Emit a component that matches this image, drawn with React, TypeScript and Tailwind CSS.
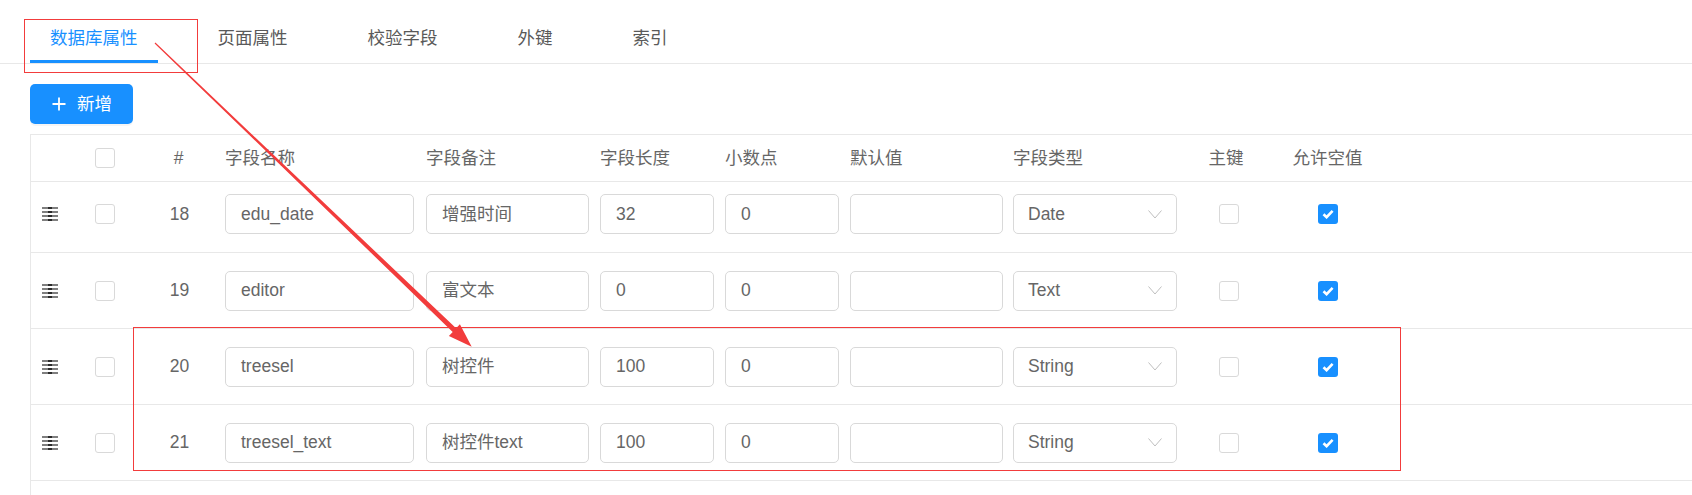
const rows = [
  { no: 18, name: "edu_date", remark: "增强时间", len: "32", type: "Date", first: true },
  { no: 19, name: "editor", remark: "富文本", len: "0", type: "Text" },
  { no: 20, name: "treesel", remark: "树控件", len: "100", type: "String" },
  { no: 21, name: "treesel_text", remark: "树控件text", len: "100", type: "String" },
];

const tabs = ["数据库属性", "页面属性", "校验字段", "外键", "索引"];

const grid =
  "grid grid-cols-[44px_65px_79px_201px_175px_124px_125px_164px_174px_92px_107px_1fr]";

function Box({ checked }: { checked?: boolean }) {
  if (checked) {
    return (
      <span className="flex h-[20px] w-[20px] items-center justify-center rounded-[3px] bg-[#1890ff]">
        <svg width="12" height="10" viewBox="0 0 12 10">
          <path d="M1.5 5.2 L4.6 8.2 L10.6 1.8" fill="none" stroke="#fff" strokeWidth="2.6" />
        </svg>
      </span>
    );
  }
  return <span className="block h-[20px] w-[20px] rounded-[3px] border border-[#d9d9d9] bg-white" />;
}

function Field({ value, w }: { value: string; w: string }) {
  return (
    <div
      className={`flex h-[40px] items-center rounded-[5px] border border-[#d9d9d9] bg-white pl-[15px] text-[#666] ${w}`}
    >
      {value}
    </div>
  );
}

function DragIcon() {
  return (
    <svg width="16" height="14" viewBox="0 0 16 14">
      {[1, 5, 9, 13].map((y) => (
        <g key={y}>
          <rect x="0" y={y - 0.75} width="16" height="1.5" fill="#555" />
          <rect x="6" y={y - 0.75} width="4" height="1.5" fill="#111" />
        </g>
      ))}
    </svg>
  );
}

export default function App() {
  return (
    <div
      className="relative h-[495px] w-full overflow-hidden bg-white text-[17.5px]"
      style={{ fontFamily: '"Liberation Sans", "Noto Sans CJK SC", sans-serif' }}
    >
      {/* tabs */}
      <div className="flex h-[64px] border-b border-[#e8e8e8] pl-[30px]">
        {tabs.map((t, i) => (
          <div
            key={t}
            className={`mr-[40px] h-[63px] px-[20px] pt-[26px] leading-[24px] ${
              i === 0 ? "border-b-[3px] border-[#1890ff] text-[#1890ff]" : "text-[#595959]"
            }`}
          >
            {t}
          </div>
        ))}
      </div>

      <button className="ml-[30px] mt-[20px] flex h-[40px] w-[103px] items-center gap-[11px] rounded-[5px] bg-[#1890ff] pl-[22px] text-white shadow-[0_2px_0_rgba(0,0,0,0.04)]">
        <svg width="14" height="14" viewBox="0 0 14 14">
          <path d="M7 0.5 V13.5 M0.5 7 H13.5" stroke="#fff" strokeWidth="1.8" />
        </svg>
        <span>新增</span>
      </button>

      {/* table */}
      <div className="ml-[30px] mt-[10px] h-[400px] border-l border-t border-[#e8e8e8]">
        <div className={`${grid} h-[47px] items-center border-b border-[#e8e8e8] text-[#666]`}>
          <div />
          <div className="pl-[20px]">
            <Box />
          </div>
          <div className="pr-[2px] text-center">#</div>
          <div className="pl-[6px]">字段名称</div>
          <div className="pl-[6px]">字段备注</div>
          <div className="pl-[5px]">字段长度</div>
          <div className="pl-[6px]">小数点</div>
          <div className="pl-[6px]">默认值</div>
          <div className="pl-[5px]">字段类型</div>
          <div className="pr-[4px] text-center">主键</div>
          <div className="text-center">允许空值</div>
          <div />
        </div>

        {rows.map((r) => (
          <div
            key={r.no}
            className={`${grid} items-center border-b border-[#e8e8e8] ${
              r.first ? "h-[71px] pb-[6px]" : "h-[76px]"
            }`}
          >
            <div className="pl-[11px]">
              <DragIcon />
            </div>
            <div className="pl-[20px]">
              <Box />
            </div>
            <div className="text-center text-[#666]">{r.no}</div>
            <div className="pl-[6px]">
              <Field value={r.name} w="w-[189px]" />
            </div>
            <div className="pl-[6px]">
              <Field value={r.remark} w="w-[163px]" />
            </div>
            <div className="pl-[5px]">
              <Field value={r.len} w="w-[114px]" />
            </div>
            <div className="pl-[6px]">
              <Field value="0" w="w-[114px]" />
            </div>
            <div className="pl-[6px]">
              <Field value="" w="w-[153px]" />
            </div>
            <div className="pl-[5px]">
              <div className="flex h-[40px] w-[164px] items-center justify-between rounded-[5px] border border-[#d9d9d9] bg-white pl-[14px] pr-[14px] text-[#666]">
                <span>{r.type}</span>
                <svg width="14" height="9" viewBox="0 0 14 9">
                  <path d="M0.5 0.5 L7 8 L13.5 0.5" fill="none" stroke="#bfbfbf" strokeWidth="1" />
                </svg>
              </div>
            </div>
            <div className="flex justify-center pl-[2px]">
              <Box />
            </div>
            <div className="flex justify-center">
              <Box checked />
            </div>
            <div />
          </div>
        ))}
      </div>

      {/* annotations */}
      <svg className="pointer-events-none absolute left-0 top-0" width="1692" height="495">
        <rect x="24.5" y="19.5" width="173" height="53" fill="none" stroke="#f23c3c" strokeWidth="1" />
        <rect x="133.5" y="327.5" width="1267" height="143" fill="none" stroke="#f23c3c" strokeWidth="1" />
        <polygon
          points="154.6,43.4 452.7,331.9 448.9,335.9 471.7,346.7 459.9,324.3 456.1,328.3 155.4,42.6"
          fill="#f23c3c"
        />
      </svg>
    </div>
  );
}
